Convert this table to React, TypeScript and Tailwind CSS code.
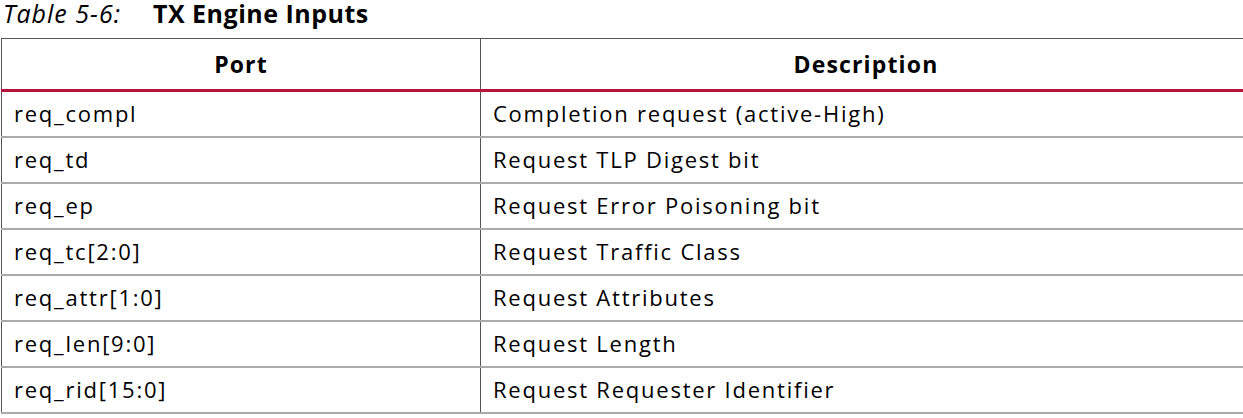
const rows: [string, string][] = [
  ["req_compl", "Completion request (active-High)"],
  ["req_td", "Request TLP Digest bit"],
  ["req_ep", "Request Error Poisoning bit"],
  ["req_tc[2:0]", "Request Traffic Class"],
  ["req_attr[1:0]", "Request Attributes"],
  ["req_len[9:0]", "Request Length"],
  ["req_rid[15:0]", "Request Requester Identifier"],
];

export default function App() {
  return (
    <div
      className="w-[1243px] h-[418px] overflow-hidden bg-white text-black"
      style={{ fontFamily: '"Open Sans", "Noto Sans", sans-serif' }}
    >
      {/* caption */}
      <div className="h-[38px] pl-[3px] flex items-start text-[25px] leading-[26px]">
        <span className="italic tracking-[0.04em]">Table 5-6:</span>
        <span className="ml-[32px] font-bold tracking-[0.02em]">TX Engine Inputs</span>
      </div>

      <table className="ml-[1px] w-[1250px] border-collapse table-fixed">
        <colgroup>
          <col className="w-[479px]" />
          <col />
        </colgroup>
        <thead>
          <tr className="h-[52px]">
            <th className="border-t border-l border-[#555] border-b-[3px] border-b-[#b8123e] text-center text-[23px] font-bold tracking-[0.05em]">
              Port
            </th>
            <th className="border-t border-l border-[#555] border-b-[3px] border-b-[#b8123e] text-center text-[23px] font-bold tracking-[0.05em]">
              Description
            </th>
          </tr>
        </thead>
        <tbody>
          {rows.map(([port, desc]) => (
            <tr key={port} className="h-[46px]">
              <td className="border-l border-[#555] border-b-2 border-b-[#aaa] pl-[12px] text-[22px] tracking-[0.08em]">
                {port}
              </td>
              <td className="border-l border-[#555] border-b-2 border-b-[#aaa] pl-[12px] text-[22px] tracking-[0.08em]">
                {desc}
              </td>
            </tr>
          ))}
        </tbody>
      </table>
    </div>
  );
}
